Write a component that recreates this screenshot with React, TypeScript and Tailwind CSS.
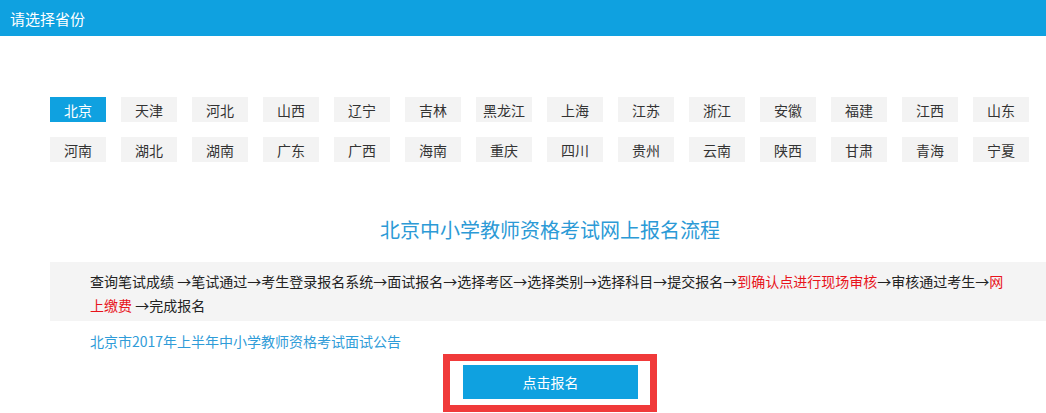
const provinces: string[][] = [
  ['北京', '天津', '河北', '山西', '辽宁', '吉林', '黑龙江', '上海', '江苏', '浙江', '安徽', '福建', '江西', '山东'],
  ['河南', '湖北', '湖南', '广东', '广西', '海南', '重庆', '四川', '贵州', '云南', '陕西', '甘肃', '青海', '宁夏'],
];

const font = 'font-["Microsoft_YaHei","Noto_Sans_CJK_SC","Noto_Sans",sans-serif]';

export default function App() {
  return (
    <div className={`w-full h-[413px] overflow-hidden bg-white ${font}`}>
      {/* header */}
      <div className="h-[36px] bg-[#0fa1e0] flex items-center pl-[10px]">
        <span className="text-[15px] leading-none text-white">请选择省份</span>
      </div>

      <div className="ml-[50px] w-[1000px]">
        {/* province picker */}
        <div className="pt-[61px] flex flex-col gap-[15px]">
          {provinces.map((row, r) => (
            <div key={r} className="flex gap-[15px]">
              {row.map((p) => {
                const active = p === '北京';
                return (
                  <button
                    key={p}
                    type="button"
                    className={
                      active
                        ? 'w-[56px] h-[25px] shrink-0 flex items-center justify-center text-[14px] leading-none bg-[#0fa1e0] text-white'
                        : 'w-[56px] h-[25px] shrink-0 flex items-center justify-center text-[14px] leading-none bg-[#f3f3f3] text-[#333]'
                    }
                  >
                    {p}
                  </button>
                );
              })}
            </div>
          ))}
        </div>

        {/* title */}
        <h1 className="mt-[53px] text-center text-[20px] leading-[30px] text-[#2c9ad6]">
          北京中小学教师资格考试网上报名流程
        </h1>

        {/* flow */}
        <div className="mt-[17px] bg-[#f4f4f4] pt-[7px] pb-[4px] px-[40px] text-[14px] leading-[24px] text-[#222]">
          查询笔试成绩 →笔试通过→考生登录报名系统→面试报名→选择考区→选择类别→选择科目→提交报名→
          <span className="text-[#e8141c]">到确认点进行现场审核</span>→审核通过考生→
          <span className="text-[#e8141c]">网上缴费</span> →完成报名
        </div>

        {/* notice link */}
        <a className="block mt-[10px] pl-[40px] text-[14px] leading-[20px] text-[#2f9cd8]">
          北京市2017年上半年中小学教师资格考试面试公告
        </a>

        {/* submit */}
        <div className="mt-[3px] flex justify-center">
          <div className="w-[214px] h-[58px] border-[7px] border-[#f03a3a] pt-[4px] pl-[13px]">
            <button
              type="button"
              className="w-[175px] h-[34px] bg-[#0fa1e0] text-white text-[14px] leading-none flex items-center justify-center"
            >
              点击报名
            </button>
          </div>
        </div>
      </div>
    </div>
  );
}
